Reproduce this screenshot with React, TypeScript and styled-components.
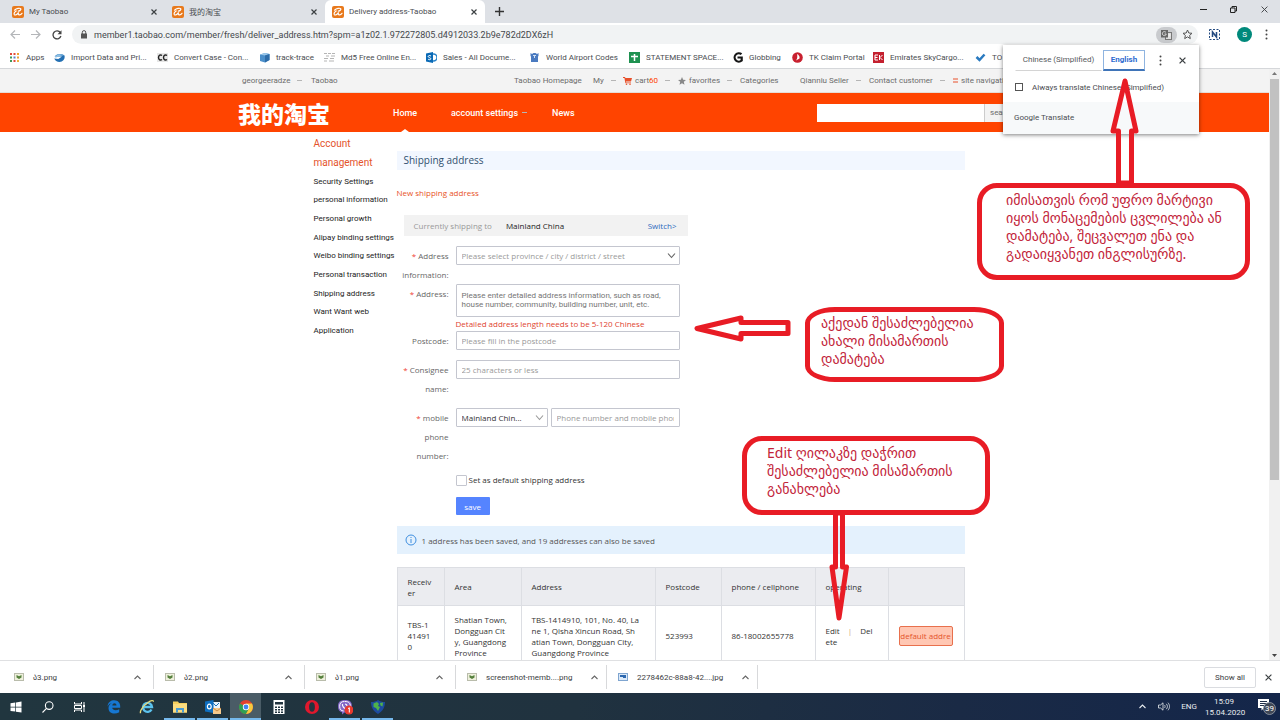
import React from "react";
import styled, { createGlobalStyle } from "styled-components";

const UI = `Roboto, "Noto Sans CJK SC", "DejaVu Sans", sans-serif`;
const CONTENT = `"Open Sans", "Noto Sans", sans-serif`;

const GlobalStyle = createGlobalStyle`
  *, *::before, *::after { box-sizing: border-box; }
  body { margin: 0; background: #fff; font-family: ${UI}; font-size: 8px; color: #3c4043; }
  button, input, select, textarea { font: inherit; color: inherit; margin: 0; }
  button { border: 0; background: none; padding: 0; }
  a { color: inherit; text-decoration: none; }
  svg { display: block; flex: none; }
`;

const Desktop = styled.div`
  position: relative;
  display: flex;
  flex-direction: column;
  height: 100vh;
  overflow: hidden;
`;

/* ---------- browser chrome ---------- */

const TabStrip = styled.div`
  display: flex;
  height: 23px;
  background: #dee1e6;
`;

const Tab = styled.div<{ $active?: boolean }>`
  display: flex;
  align-items: center;
  gap: 5px;
  width: 160px;
  padding: 0 7px 0 7px;
  border-radius: 6px 6px 0 0;
  background: ${(p) => (p.$active ? "#fff" : "transparent")};
  color: #4a4d51;
  white-space: nowrap;
`;

const Tabs = styled.div`
  display: flex;
  padding-left: 5px;
`;

const Grow = styled.span`
  flex: 1;
`;

const IconButton = styled.button<{ $w?: number }>`
  display: flex;
  align-items: center;
  justify-content: center;
  width: ${(p) => p.$w ?? 10}px;
  color: #3c4043;
`;

const WindowButtons = styled.div`
  display: flex;
  margin-left: auto;
  padding-bottom: 4px;
`;

const Toolbar = styled.div`
  display: flex;
  align-items: center;
  height: 23px;
  padding: 0 6px 0 4px;
`;

const AddressBar = styled.div`
  display: flex;
  align-items: center;
  flex: 1;
  height: 19px;
  margin-left: 5px;
  padding: 0 5px 0 8px;
  border-radius: 10px;
  background: #f1f3f4;
`;

const Url = styled.input`
  flex: 1;
  border: 0;
  outline: 0;
  padding: 0 0 0 6px;
  background: none;
  color: #45484c;
  font-size: 9px;
`;

const TranslateBadge = styled.button`
  display: flex;
  align-items: center;
  justify-content: center;
  width: 21px;
  height: 16px;
  margin-right: 5px;
  border-radius: 8px;
  background: #c9cbce;
`;

const Avatar = styled.button`
  width: 15px;
  height: 15px;
  margin: 0 6px 0 7px;
  border-radius: 50%;
  background: #00897b;
  color: #fff;
  line-height: 15px;
`;

const Bookmarks = styled.nav`
  display: flex;
  align-items: center;
  height: 23px;
  padding-left: 9px;
  border-bottom: 1px solid #d5d7da;
  overflow: hidden;
`;

const Bookmark = styled.a<{ $w: number }>`
  display: flex;
  align-items: center;
  gap: 6px;
  flex: none;
  width: ${(p) => p.$w}px;
  height: 20px;
  color: #4a4d51;
  white-space: nowrap;
`;

/* ---------- page ---------- */

const Viewport = styled.div`
  display: flex;
  flex: 1;
  min-height: 0;
`;

const Page = styled.div`
  flex: 1;
  min-width: 0;
  overflow: hidden;
`;

const Scrollbar = styled.div`
  display: flex;
  flex-direction: column;
  align-items: center;
  width: 11px;
  padding: 3px 0;
  background: #f1f1f1;
`;

const Thumb = styled.div`
  width: 9px;
  height: 401px;
  margin-top: 4px;
  margin-bottom: auto;
  background: #c1c1c1;
`;

const SiteBar = styled.div`
  height: 24px;
  background: #f3f3f3;
  border-bottom: 1px solid #e6ddd6;
`;

const Wide = styled.div`
  display: flex;
  align-items: center;
  width: 793px;
  height: 100%;
  margin: 0 auto;
`;

const SiteLinks = styled(Wide)`
  padding-left: 4px;
`;

const SiteLink = styled.a<{ $w: number }>`
  display: flex;
  align-items: center;
  gap: 3px;
  flex: none;
  width: ${(p) => p.$w}px;
  color: #6c6c6c;
  white-space: nowrap;
`;

const Orange = styled.em`
  color: #f40;
  font-style: normal;
`;

const Caret = styled.i`
  width: 5px;
  height: 1px;
  margin-left: 4px;
  background: #b5b5b5;
`;

const Brand = styled.header`
  height: 39px;
  background: #ff4400;
`;

const BrandName = styled.a`
  width: 155px;
  color: #fff;
  font: 900 23px/38px "Noto Sans CJK SC", sans-serif;
`;

const BrandLink = styled.a<{ $w: number; $current?: boolean }>`
  position: relative;
  display: flex;
  align-items: center;
  flex: none;
  width: ${(p) => p.$w}px;
  height: 39px;
  color: #fff;
  font-size: 9px;
  font-weight: 500;
  white-space: nowrap;

  &::after {
    content: "";
    display: ${(p) => (p.$current ? "block" : "none")};
    position: absolute;
    left: 8px;
    bottom: 0;
    border: 4px solid transparent;
    border-top: 0;
    border-bottom: 3px solid #fff;
  }
`;

const SearchInput = styled.input`
  flex: none;
  width: 167px;
  height: 18px;
  border: 0;
  background: #fff;
`;

const SearchButton = styled.button`
  flex: none;
  width: 47px;
  height: 18px;
  padding-left: 5px;
  border-left: 1px solid #ccc;
  background: #f3f3f3;
  color: #6c6c6c;
  text-align: left;
`;

const Columns = styled.div`
  display: flex;
  width: 660px;
  margin: 0 auto;
`;

const SideNav = styled.nav`
  flex: none;
  width: 92px;
  padding: 2px 0 0 9px;
`;

const SideTitle = styled.h2`
  margin: 0;
  color: #e4532b;
  font-size: 10px;
  font-weight: 400;
  line-height: 19px;
`;

const SideList = styled.ul`
  display: grid;
  grid-auto-rows: 1fr;
  align-items: center;
  height: 168px;
  margin: 0;
  padding: 0;
  list-style: none;
  color: #1c1c1c;
  white-space: nowrap;
`;

const Main = styled.main`
  flex: 1;
  padding-top: 19px;
  font-family: ${CONTENT};
`;

const PageTitle = styled.h1`
  margin: 0;
  padding-left: 7px;
  background: #f2f7ff;
  color: #31506e;
  font-size: 10px;
  font-weight: 400;
  line-height: 19px;
`;

const NewAddress = styled.p`
  margin: 13px 0;
  color: #e8531f;
  line-height: 19px;
`;

const Destination = styled.div`
  display: flex;
  align-items: center;
  gap: 14px;
  width: 284px;
  height: 21px;
  margin-left: 7px;
  padding: 0 11px 0 10px;
  background: #f2f2f2;
  color: #999;
`;

const Country = styled.span`
  flex: 1;
  color: #222;
`;

const BlueLink = styled.a`
  color: #2e6bc0;
`;

const Form = styled.form`
  display: flex;
  flex-direction: column;
  padding-top: 10px;
  color: #666;
`;

const Field = styled.div<{ $gap?: number }>`
  display: grid;
  grid-template-columns: 52px 224px;
  column-gap: 7px;
  align-items: start;
  margin-bottom: ${(p) => p.$gap ?? 0}px;
`;

const Label = styled.label`
  line-height: 19px;
  text-align: right;
`;

const Star = styled.span`
  color: #f04134;
`;

const Split = styled.div`
  display: grid;
  grid-template-columns: 92px 129px;
  gap: 3px;
`;

const TextInput = styled.input`
  width: 100%;
  height: 19px;
  padding: 0 5px;
  border: 1px solid #c4c6cf;
  border-radius: 1px;
  background: #fff;
  outline: 0;
  &::placeholder { color: #999; opacity: 1; }
`;

const SelectBox = styled.div`
  position: relative;
  svg { position: absolute; right: 4px; top: 5px; pointer-events: none; }
`;

const Select = styled.select<{ $dark?: boolean }>`
  display: block;
  width: 100%;
  height: 19px;
  padding: 0 5px;
  appearance: none;
  border: 1px solid #c4c6cf;
  border-radius: 1px;
  background: #fff;
  color: ${(p) => (p.$dark ? "#333" : "#999")};
`;

const TextArea = styled.textarea`
  display: block;
  width: 100%;
  height: 33px;
  padding: 6px 5px;
  border: 1px solid #c4c6cf;
  border-radius: 1px;
  resize: none;
  overflow: hidden;
  font-family: ${UI};
  line-height: 9px;
  outline: 0;
  &::placeholder { color: #757575; opacity: 1; }
`;

const ErrorText = styled.div`
  color: #e0432f;
  line-height: 14px;
`;

const CheckLabel = styled.label`
  display: flex;
  align-items: center;
  gap: 2px;
  margin: 9px 0 11px 59px;
  color: #333;
  line-height: 12px;
`;

const Checkbox = styled.input`
  appearance: none;
  width: 11px;
  height: 11px;
  border: 1px solid #c4c6cf;
  border-radius: 1px;
  background: #fff;
`;

const Save = styled.button`
  width: 34px;
  height: 18px;
  margin-left: 59px;
  border-radius: 1px;
  background: #5584ff;
  color: #fff;
`;

const Notice = styled.div`
  display: flex;
  align-items: center;
  gap: 5px;
  height: 28px;
  margin: 11px 0 13px;
  padding-left: 8px;
  background: #e4f1fd;
  color: #555;
`;

const Table = styled.table`
  width: 567px;
  table-layout: fixed;
  border-collapse: collapse;
  color: #333;
  line-height: 11px;
`;

const Cell = styled.td`
  height: 60px;
  padding: 0 0 0 10px;
  border: 1px solid #dcdee3;
  white-space: pre;
  text-align: left;
`;

const HeadCell = styled.th`
  height: 38px;
  padding: 0 0 0 10px;
  border: 1px solid #dcdee3;
  background: #ebecf0;
  font-weight: 400;
  text-align: left;
  white-space: pre;
`;

const Bar = styled.span`
  margin: 0 8px;
  color: #c9a27c;
`;

const DefaultButton = styled.button`
  display: block;
  width: 54px;
  height: 20px;
  border: 1px solid #e8704d;
  border-radius: 2px;
  background: #ffc7b3;
  color: #e4532b;
  overflow: hidden;
`;

/* ---------- translate bubble ---------- */

const Bubble = styled.section`
  position: absolute;
  top: 45px;
  right: 81px;
  width: 196px;
  background: #fff;
  box-shadow: 0 1px 4px rgba(0, 0, 0, 0.5);
  color: #4a4d51;
`;

const BubbleTop = styled.div`
  display: flex;
  align-items: center;
  height: 30px;
  padding: 0 7px 0 12px;
`;

const LangTab = styled.button<{ $active?: boolean; $w: number }>`
  width: ${(p) => p.$w}px;
  height: 21px;
  margin-right: 1px;
  border: 1px solid ${(p) => (p.$active ? "#8fb4e0" : "transparent")};
  border-bottom: ${(p) => (p.$active ? "2px solid #3f74b8" : "1px solid #d4d4d4")};
  color: ${(p) => (p.$active ? "#2f6bd0" : "#55585c")};
  font-weight: ${(p) => (p.$active ? 700 : 400)};
  line-height: 18px;
  white-space: nowrap;
`;

const Always = styled.label`
  display: flex;
  align-items: center;
  gap: 9px;
  height: 27px;
  padding: 0 0 3px 12px;
`;

const AlwaysBox = styled.input`
  appearance: none;
  width: 8px;
  height: 8px;
  margin: 0;
  border: 1px solid #555;
`;

const BubbleFoot = styled.div`
  height: 32px;
  padding-left: 11px;
  background: #f7f9fa;
  line-height: 32px;
`;

/* ---------- downloads and taskbar ---------- */

const Downloads = styled.div`
  display: flex;
  align-items: center;
  height: 33px;
  padding-left: 3px;
  border-top: 1px solid #dfe0e2;
  background: #fff;
`;

const Download = styled.div`
  display: flex;
  align-items: center;
  gap: 9px;
  width: 151px;
  height: 24px;
  padding: 0 11px;
  border-right: 1px solid #d8d9db;
  white-space: nowrap;
`;

const ShowAll = styled.button`
  width: 52px;
  height: 21px;
  margin: 0 0 0 auto;
  border: 1px solid #dadce0;
  border-radius: 2px;
`;

const Taskbar = styled.footer`
  display: flex;
  align-items: stretch;
  height: 27px;
  background: linear-gradient(90deg, #21363f, #20323f 45%, #1a2a45 75%, #14264a);
  color: #e8ecef;
`;

const TaskButton = styled.button<{ $w: number; $open?: boolean; $active?: boolean }>`
  display: flex;
  align-items: center;
  justify-content: center;
  width: ${(p) => p.$w}px;
  border: solid ${(p) => (p.$active ? "#4a5c66" : "transparent")};
  border-width: 2px 0;
  border-bottom-color: ${(p) => (p.$open || p.$active ? "#76b9ed" : "transparent")};
  background: ${(p) => (p.$active ? "#4a5c66" : "transparent")};
`;

const TaskGroup = styled.div<{ $gap: number }>`
  display: flex;
  gap: ${(p) => p.$gap}px;
  margin-right: 2px;
`;

const Tray = styled.div`
  display: flex;
  align-items: center;
  margin-left: auto;
`;

const Clock = styled.time`
  width: 38px;
  margin: 0 11px 0 8px;
  line-height: 11px;
  text-align: center;
  white-space: nowrap;
`;

/* ---------- instruction notes laid over the screen ---------- */

const Callout = styled.aside<{ $x: number; $y: number; $w: number; $h: number; $r: string; $pad: string }>`
  position: absolute;
  left: ${(p) => p.$x}px;
  top: ${(p) => p.$y}px;
  width: ${(p) => p.$w}px;
  height: ${(p) => p.$h}px;
  padding: ${(p) => p.$pad};
  border: 5px solid #e81c25;
  border-radius: ${(p) => p.$r};
  color: #c2243a;
  font-family: "Noto Sans", "DejaVu Sans", sans-serif;
  font-size: 14px;
  line-height: 18px;
  white-space: pre;
`;

const Arrow = styled.svg<{ $x: number; $y: number }>`
  position: absolute;
  left: ${(p) => p.$x}px;
  top: ${(p) => p.$y}px;
  fill: none;
  stroke: #e81c25;
  stroke-width: 5;
  stroke-linejoin: round;
`;

/* ---------- icons ---------- */

const Favicon = () => (
  <svg width="12" height="12" viewBox="0 0 12 12">
    <rect width="12" height="12" rx="2" fill="#e8791c" />
    <path d="M2.500 4.200C4.500 2.300 8 1.800 8.800 2.800c.5.900-1 2-2.500 2.400M4.200 5C2.500 6 1.500 7.800 2.400 8.700c1.100.9 3.200-.5 4.100-2.300-.5 1.700-.2 2.700 1 2.500 1-.1 1.900-.8 2.500-1.600" fill="none" stroke="#fff" strokeWidth="1.200" strokeLinecap="round" />
  </svg>
);

const Close = ({ s = 6, w = 1.2 }: { s?: number; w?: number }) => (
  <svg width={s} height={s} viewBox="0 0 6 6" stroke="currentColor" strokeWidth={w}>
    <path d="M.5.5l5 5M5.500.5l-5 5" />
  </svg>
);

const Chevron = ({ up, c = "#666", s = 9 }: { up?: boolean; c?: string; s?: number }) => (
  <svg width={s} height={s} viewBox="0 0 9 9" fill="none" stroke={c} strokeWidth="1.100">
    <path d={up ? "M1.500 6l3-3 3 3" : "M1 2.500L4.500 6.500 8 2.500"} />
  </svg>
);

const Dots = () => (
  <svg width="3" height="11" viewBox="0 0 3 11" fill="#444">
    <circle cx="1.500" cy="1.500" r="1" />
    <circle cx="1.500" cy="5.500" r="1" />
    <circle cx="1.500" cy="9.500" r="1" />
  </svg>
);

const Picture = ({ blue }: { blue?: boolean }) => (
  <svg width="10" height="8" viewBox="0 0 10 8">
    <rect x=".5" y=".5" width="9" height="7" fill={blue ? "#dbe9f8" : "#eef0dc"} stroke={blue ? "#7fa5d0" : "#b9bcab"} />
    <path d={blue ? "M2 2h6v3H5V4H2z" : "M2.500 2l2.500 1.200L7.500 2v2.500L5 6 2.500 4.500z"} fill={blue ? "#2c68b0" : "#55803c"} />
  </svg>
);

const bookmarkIcons: Record<string, React.ReactNode> = {
  apps: (
    <>
      {["#e24a3b", "#e24a3b", "#f0a22c", "#3f9a58", "#5a7dc8", "#e8a33a", "#3f9a58", "#e24a3b", "#f0b13c"].map((c, i) => (
        <rect key={i} x={1 + (i % 3) * 3.5} y={1 + Math.floor(i / 3) * 3.5} width="2" height="2" fill={c} />
      ))}
    </>
  ),
  ie: (
    <>
      <path d="M.5 4.500C3 1 9 1.500 10.500 3.500c.8 3-1 6-5 6.500C3 10 1 8.500.3 6.500l4 .5L8 4.500z" fill="#2470b3" />
      <path d="M1 4.500c3-3 7-2.500 9-.8-3-.7-5 .8-8.500 2z" fill="#8cc0e6" />
    </>
  ),
  cc: (
    <>
      <rect y="1" width="11" height="9" fill="#e6e6e6" />
      <path d="M5 3.500C3.500 2.300 1.500 3.200 1.500 5.500S3.500 8.700 5 7.500M10 3.500C8.500 2.300 6.500 3.200 6.500 5.500S8.500 8.700 10 7.500" fill="none" stroke="#222" strokeWidth="1.400" />
    </>
  ),
  cube: (
    <>
      <path d="M1 2.500L6 1l4.500 1v6L6 10.500 1 9z" fill="#4b8fca" />
      <path d="M1 2.500L6 1l4.500 1L6 3.500z" fill="#9cc8ea" />
      <path d="M6 3.500l4.500-1.500v6L6 10.500z" fill="#2d6ca8" />
    </>
  ),
  md: <path d="M0 1.500h3M4 1.500h3M8 1.500h3M2 4h3M7 4h4M0 6.500h4M6 6.500h4M0 9h3M5 9h5" stroke="#b5b5b5" />,
  sales: (
    <>
      <circle cx="7.500" cy="5.500" r="3.500" fill="none" stroke="#2a84c9" strokeWidth="1.500" />
      <path d="M0 1.500L7 0v11L0 9.500z" fill="#0a6ab6" />
      <path d="M5 4C3.500 3 2 3.600 2.200 4.700S5 5.600 4.800 6.800 3 8 2 7" fill="none" stroke="#fff" />
    </>
  ),
  shirt: (
    <>
      <path d="M1.500 1l1.500 1 1.500-1h2L8 2l1.500-1v3L9 4.500V10H2V4.500L1.500 4z" fill="#4a7ac0" />
      <path d="M4 3.500h3M5.500 3.500V6" stroke="#cfe0f5" fill="none" />
    </>
  ),
  sheet: (
    <>
      <rect width="11" height="11" fill="#1e9150" />
      <path d="M2 4.500h7M5.500 2v7" stroke="#fff" strokeWidth="1.500" />
    </>
  ),
  glob: <path d="M9.500 2.200A4.200 4.200 0 1 0 9.700 8.500V5.500H5.500" fill="none" stroke="#161616" strokeWidth="2.200" />,
  tk: (
    <>
      <circle cx="5.500" cy="5.500" r="5.300" fill="#c8202f" />
      <path d="M5 2c2 1 3 2.500 2.500 4.500L4 8.500C5.500 6.500 5.500 4.500 5 2z" fill="#fff" />
    </>
  ),
  ek: (
    <>
      <rect width="11" height="11" fill="#c4202f" />
      <path d="M5 3H2v5h3M2 5.500h2.500M6.500 3v5M9.500 3L7 5.500 9.500 8" stroke="#fff" fill="none" />
    </>
  ),
  check: <path d="M1.500 5l3 3L9.500 2.500" fill="none" stroke="#2a7ac0" strokeWidth="2.500" />,
};

const bookmarks: [string, string, number][] = [
  ["apps", "Apps", 45],
  ["ie", "Import Data and Pri...", 103],
  ["cc", "Convert Case - Con...", 102],
  ["cube", "track-trace", 65],
  ["md", "Md5 Free Online En...", 102],
  ["sales", "Sales - All Docume...", 103],
  ["shirt", "World Airport Codes", 100],
  ["sheet", "STATEMENT SPACE...", 103],
  ["glob", "Globbing", 60],
  ["tk", "TK Claim Portal", 81],
  ["ek", "Emirates SkyCargo...", 102],
  ["check", "TO", 50],
];

const sideItems = [
  "Security Settings",
  "personal information",
  "Personal growth",
  "Alipay binding settings",
  "Weibo binding settings",
  "Personal transaction",
  "Shipping address",
  "Want Want web",
  "Application",
];

const columns: [string, number][] = [
  ["Receiv\ner", 47],
  ["Area", 77],
  ["Address", 134],
  ["Postcode", 66],
  ["phone / cellphone", 94],
  ["operating", 73],
  ["", 76],
];

type Task = { name: string; open?: boolean; active?: boolean; art: React.ReactNode };

const systemTasks: Task[] = [
  { name: "Start", art: <path d="M2.500 4.200L7.300 3.500v4.200H2.500zM8 3.400l5.500-.8v5.100H8zM2.500 8.400h4.800v4.200l-4.800-.7zM8 8.400h5.500v5L8 12.700z" fill="#fff" /> },
  { name: "Search", art: <g fill="none" stroke="#fff" strokeWidth="1.100"><circle cx="9.200" cy="6.600" r="3.800" /><path d="M6.500 9.300L2.500 13.500" /></g> },
  { name: "Task view", art: <g fill="none" stroke="#fff"><path d="M2.500 3v2h7V3M2.500 13v-2h7v2M2.500 6.500h7v3h-7zM12 3v10" /><path d="M11 7h2" strokeWidth="2" /></g> },
];

const appTasks: Task[] = [
  { name: "Edge", art: <path d="M1.500 7.500C2 3 5 1.300 8.200 1.300c4 0 6 3 6 6.200v1.300H6.200c.2 2.500 4 3.200 7 1.500v3C8.500 15.900 2.500 14.500 2.500 9c0-2.500 1.500-4 3.500-5C4 4.300 2.500 5.500 1.500 7.500zM6.300 6.500h4.200C10.400 3.600 6.600 3.700 6.300 6.500z" fill="#1677d2" /> },
  { name: "Internet Explorer", art: <g fill="none"><path d="M12.500 10.500A4.500 4.500 0 1 1 13 8H4.500" stroke="#5cc3ee" strokeWidth="2.400" /><path d="M1.500 14.200C.5 12 4 7 9 3.500c3-2 5.500-2.500 5.500-.8" stroke="#e9dc7a" strokeWidth="1.200" /></g> },
  { name: "File Explorer", open: true, art: <g><path d="M1 2.500h5l1 1.500h8v9.500H1z" fill="#f5cf5e" /><path d="M1 5h14v8.500H1z" fill="#fbdc80" /><path d="M4 13.500V9h8v4.500h-2V11H6v2.500z" fill="#4b9cd3" /></g> },
  { name: "Outlook", open: true, art: <g><path d="M7 3h8v8H7z" fill="#e9f3fb" /><path d="M8 4l3 3 3-3" stroke="#1870b8" fill="none" /><path d="M0 2.500L8.500 1v13L0 12.500z" fill="#0f6fc0" /><ellipse cx="4.300" cy="7.500" rx="1.900" ry="2.300" fill="none" stroke="#fff" strokeWidth="1.200" /><path d="M8 9h8v6H8z" fill="#f6c98c" /><path d="M8 9l4 3 4-3" stroke="#c98c45" fill="none" /></g> },
  { name: "Chrome", active: true, art: <g><circle cx="8" cy="8" r="7" fill="#e2412f" /><path d="M8 8L2 4.400A7 7 0 0 0 8 15l3-5.500z" fill="#2fa052" /><path d="M8 15A7 7 0 0 0 14 4.500H8l3 5z" fill="#f7ca3e" /><circle cx="8" cy="8" r="3.200" fill="#fff" /><circle cx="8" cy="8" r="2.400" fill="#4284ee" /></g> },
  { name: "Calculator", art: <g><rect x="2.500" y="1" width="11" height="14" fill="#fff" /><path d="M4 3h8v2.500H4zM4 7.500h2v1.500H4zM7 7.500h2v1.500H7zM10 7.500h2v1.500h-2zM4 10h2v1.500H4zM7 10h2v1.500H7zM10 10h2v1.500h-2zM4 12.500h2V14H4zM7 12.500h2V14H7zM10 12.500h2V14h-2z" fill="#22343f" /></g> },
  { name: "Opera", art: <g><circle cx="8" cy="8" r="7" fill="#e0182d" /><ellipse cx="8" cy="8" rx="2.900" ry="4.800" fill="#22343f" /></g> },
  { name: "Viber", open: true, art: <g><path d="M8 1c5 0 7 2 7 6.500S12 13.500 7.500 13.500L5 15.500v-2.300C2 12.500 1 10.500 1 7.500 1 3 3 1 8 1z" fill="#8368c8" /><path d="M7.500 2.500C4 2.500 2.700 4 2.700 7.300s1.300 4.500 4 4.700M8 2.500c3.800 0 5.300 1.300 5.300 4.800" fill="none" stroke="#fff" /><path d="M5.500 5c-.5 2 1.500 4.500 4 5M8 5c1.500.2 2 .8 2.100 2" fill="none" stroke="#fff" strokeWidth="1.200" /><circle cx="12" cy="11" r="4.500" fill="#e83a2e" /><path d="M11 9.700l1.300-1v4.800" stroke="#fff" fill="none" /></g> },
  { name: "Security", open: true, art: <g><path d="M8 1c2 1.500 4 2 7 2 0 5-2 9-7 12C3 12 1 8 1 3 4 3 6 2.500 8 1z" fill="#1d4ba0" /><path d="M3.500 4.500L7 3l2 2-1 2 2 1-2 4-2-3-2.500-1zM10 4l3-.5-.5 4-2-1z" fill="#4fb24a" /></g> },
];

const TaskItem = ({ t, w }: { t: Task; w: number }) => (
  <TaskButton aria-label={t.name} $w={w} $open={t.open} $active={t.active}>
    <svg width="16" height="16" viewBox="0 0 16 16">{t.art}</svg>
  </TaskButton>
);

export default function App() {
  return (
    <Desktop>
      <GlobalStyle />

      <TabStrip>
        <Tabs>
          {["My Taobao", "我的淘宝", "Delivery address-Taobao"].map((t, i) => (
            <Tab key={t} $active={i === 2}>
              <Favicon />
              {t}
              <Grow />
              <IconButton aria-label="Close tab" $w={8}><Close /></IconButton>
            </Tab>
          ))}
        </Tabs>
        <IconButton aria-label="New tab" $w={28}>
          <svg width="9" height="9" viewBox="0 0 9 9" stroke="#333" strokeWidth="1.400"><path d="M4.500 0v9M0 4.500h9" /></svg>
        </IconButton>
        <WindowButtons>
          <IconButton aria-label="Minimize" $w={30}>
            <svg width="7" height="7" viewBox="0 0 7 7" stroke="#222"><path d="M0 3.500h7" /></svg>
          </IconButton>
          <IconButton aria-label="Restore" $w={31}>
            <svg width="7" height="7" viewBox="0 0 7 7" stroke="#222" fill="none"><path d="M.5 2h4.500v4.500H.5zM2 2V.5h4.500V5H5" /></svg>
          </IconButton>
          <IconButton aria-label="Close window" $w={31}><Close s={7} w={0.8} /></IconButton>
        </WindowButtons>
      </TabStrip>

      <Toolbar>
        <IconButton aria-label="Back" $w={21}>
          <svg width="10" height="9" viewBox="0 0 10 9" fill="none" stroke="#b4b6b9" strokeWidth="1.200"><path d="M10 4.500H1M5 .5l-4 4 4 4" /></svg>
        </IconButton>
        <IconButton aria-label="Forward" $w={21}>
          <svg width="10" height="9" viewBox="0 0 10 9" fill="none" stroke="#b4b6b9" strokeWidth="1.200"><path d="M0 4.500h9M5 .5l4 4-4 4" /></svg>
        </IconButton>
        <IconButton aria-label="Reload" $w={21}>
          <svg width="10" height="10" viewBox="0 0 10 10"><path d="M8.300 2.500A4 4 0 1 0 8.900 6" fill="none" stroke="#444" strokeWidth="1.300" /><path d="M9.500.3v4h-4z" fill="#444" /></svg>
        </IconButton>
        <AddressBar>
          <svg width="8" height="9" viewBox="0 0 8 9"><rect x="1" y="3.500" width="6" height="5" fill="#555" /><path d="M2.300 4V2.300a1.700 1.700 0 0 1 3.400 0V4" fill="none" stroke="#555" /></svg>
          <Url aria-label="Address" defaultValue="member1.taobao.com/member/fresh/deliver_address.htm?spm=a1z02.1.972272805.d4912033.2b9e782d2DX6zH" />
          <TranslateBadge aria-label="Translate this page">
            <svg width="11" height="10" viewBox="0 0 11 10"><rect x="4.500" y="2.500" width="6" height="7" fill="#ddd" stroke="#777" /><rect width="7" height="7.500" fill="#666" /><path d="M5 2.500A2 2 0 1 0 5.300 4H3.500M7 5h3M8.500 4v1c0 1.500-.5 2-1.500 2.500" fill="none" stroke="#eee" strokeWidth=".8" /></svg>
          </TranslateBadge>
          <svg width="11" height="11" viewBox="0 0 11 11" fill="none" stroke="#555"><path d="M5.500 1l1.300 3 3.200.3-2.400 2.100.7 3.200-2.800-1.700-2.800 1.700.7-3.200L1 4.300 4.200 4z" /></svg>
        </AddressBar>
        <IconButton aria-label="Extension" $w={32}>
          <svg width="11" height="11" viewBox="0 0 11 11" fill="none" stroke="#234a80"><rect x=".5" y=".5" width="10" height="10" strokeDasharray="2 1.500" /><path d="M3.500 8V3l4 5V3" strokeWidth="1.500" /></svg>
        </IconButton>
        <Avatar>S</Avatar>
        <IconButton aria-label="Menu" $w={16}><Dots /></IconButton>
      </Toolbar>

      <Bookmarks>
        {bookmarks.map(([icon, text, w]) => (
          <Bookmark key={text} href="#" $w={w}>
            <svg width="11" height="11" viewBox="0 0 11 11">{bookmarkIcons[icon]}</svg>
            {text}
          </Bookmark>
        ))}
      </Bookmarks>

      <Viewport>
        <Page>
          <SiteBar>
            <SiteLinks>
              <SiteLink href="#" $w={69}>georgeeradze<Caret /></SiteLink>
              <SiteLink href="#" $w={203}>Taobao</SiteLink>
              <SiteLink href="#" $w={79}>Taobao Homepage</SiteLink>
              <SiteLink href="#" $w={30}>My<Caret /></SiteLink>
              <SiteLink href="#" $w={55}>
                <svg width="9" height="8" viewBox="0 0 9 8" fill="#e8502a"><path d="M0 0h2l.4 1H9L8 4.500H3L3.200 5.500H8v.8H2.400L1.400 1H0z" /><circle cx="3.500" cy="7.200" r=".8" /><circle cx="7" cy="7.200" r=".8" /></svg>
                <span>cart<Orange>60</Orange></span><Caret />
              </SiteLink>
              <SiteLink href="#" $w={62}>
                <svg width="8" height="8" viewBox="0 0 11 11" fill="#888"><path d="M5.500 0l1.600 3.700 3.900.4-3 2.600.9 4-3.400-2.100-3.400 2.100.9-4-3-2.600 3.900-.4z" /></svg>
                favorites<Caret />
              </SiteLink>
              <SiteLink href="#" $w={60}>Categories</SiteLink>
              <SiteLink href="#" $w={69}>Qianniu Seller<Caret /></SiteLink>
              <SiteLink href="#" $w={84}>Contact customer<Caret /></SiteLink>
              <SiteLink href="#" $w={70}>
                <svg width="5" height="5" viewBox="0 0 5 5" stroke="#e8502a"><path d="M0 1h5M0 4h5" /></svg>
                site navigation
              </SiteLink>
            </SiteLinks>
          </SiteBar>

          <Brand>
            <Wide>
              <BrandName href="#">我的淘宝</BrandName>
              <BrandLink href="#" $w={58} $current>Home</BrandLink>
              <BrandLink href="#" $w={101}>account settings<Caret /></BrandLink>
              <BrandLink href="#" $w={265}>News</BrandLink>
              <SearchInput aria-label="Search Taobao" />
              <SearchButton>search</SearchButton>
            </Wide>
          </Brand>

          <Columns>
            <SideNav>
              <SideTitle>Account<br />management</SideTitle>
              <SideList>
                {sideItems.map((s) => <li key={s}><a href="#">{s}</a></li>)}
              </SideList>
            </SideNav>
            <Main>
              <PageTitle>Shipping address</PageTitle>
              <NewAddress>New shipping address</NewAddress>
              <Destination>
                <span>Currently shipping to</span>
                <Country>Mainland China</Country>
                <BlueLink href="#">Switch&gt;</BlueLink>
              </Destination>
              <Form>
                <Field>
                  <Label htmlFor="region"><Star>*</Star> Address<br />information:</Label>
                  <SelectBox>
                    <Select id="region"><option>Please select province / city / district / street</option></Select>
                    <Chevron />
                  </SelectBox>
                </Field>
                <Field>
                  <Label htmlFor="street"><Star>*</Star> Address:</Label>
                  <div>
                    <TextArea id="street" placeholder="Please enter detailed address information, such as road, house number, community, building number, unit, etc." />
                    <ErrorText>Detailed address length needs to be 5-120 Chinese</ErrorText>
                  </div>
                </Field>
                <Field $gap={10}>
                  <Label htmlFor="postcode">Postcode:</Label>
                  <TextInput id="postcode" placeholder="Please fill in the postcode" />
                </Field>
                <Field $gap={10}>
                  <Label htmlFor="consignee"><Star>*</Star> Consignee<br />name:</Label>
                  <TextInput id="consignee" placeholder="25 characters or less" />
                </Field>
                <Field>
                  <Label htmlFor="phone"><Star>*</Star> mobile<br />phone<br />number:</Label>
                  <Split>
                    <SelectBox>
                      <Select $dark aria-label="Phone region"><option>Mainland Chin...</option></Select>
                      <Chevron c="#999" />
                    </SelectBox>
                    <TextInput id="phone" placeholder="Phone number and mobile phone number" />
                  </Split>
                </Field>
                <CheckLabel><Checkbox type="checkbox" />Set as default shipping address</CheckLabel>
                <Save type="button">save</Save>
              </Form>
              <Notice>
                <svg width="12" height="12" viewBox="0 0 12 12" fill="none" stroke="#3f8fe0"><circle cx="6" cy="6" r="5" /><path d="M6 3v1M6 5v4" /></svg>
                1 address has been saved, and 19 addresses can also be saved
              </Notice>
              <Table>
                <colgroup>{columns.map(([c, w]) => <col key={c} width={w} />)}</colgroup>
                <thead>
                  <tr>{columns.map(([c]) => <HeadCell key={c}>{c}</HeadCell>)}</tr>
                </thead>
                <tbody>
                  <tr>
                    <Cell>{"TBS-1\n41491\n0"}</Cell>
                    <Cell>{"Shatian Town,\nDongguan Cit\ny, Guangdong\nProvince"}</Cell>
                    <Cell>{"TBS-1414910, 101, No. 40, La\nne 1, Qisha Xincun Road, Sh\natian Town, Dongguan City,\nGuangdong Province"}</Cell>
                    <Cell>523993</Cell>
                    <Cell>86-18002655778</Cell>
                    <Cell><a href="#">Edit</a><Bar>|</Bar><a href="#">Del<br />ete</a></Cell>
                    <Cell><DefaultButton>default addre</DefaultButton></Cell>
                  </tr>
                </tbody>
              </Table>
            </Main>
          </Columns>
        </Page>
        <Scrollbar>
          <svg width="5" height="3" viewBox="0 0 5 3"><path d="M0 3L2.500 0 5 3z" fill="#777" /></svg>
          <Thumb />
          <svg width="5" height="3" viewBox="0 0 5 3"><path d="M0 0l2.500 3L5 0z" fill="#444" /></svg>
        </Scrollbar>
      </Viewport>

      <Downloads>
        {["ა3.png", "ა2.png", "ა1.png", "screenshot-memb....png", "2278462c-88a8-42....jpg"].map((f, i) => (
          <Download key={f}>
            <Picture blue={i === 4} />
            {f}
            <Grow />
            <Chevron up />
          </Download>
        ))}
        <ShowAll>Show all</ShowAll>
        <IconButton aria-label="Close downloads" $w={24}><Close s={7} w={1} /></IconButton>
      </Downloads>

      <Taskbar>
        <TaskGroup $gap={0}>{systemTasks.map((t) => <TaskItem key={t.name} t={t} w={32} />)}</TaskGroup>
        <TaskGroup $gap={2}>{appTasks.map((t) => <TaskItem key={t.name} t={t} w={31} />)}</TaskGroup>
        <Tray>
          <Chevron up c="#e8ecef" />
          <IconButton aria-label="Volume" $w={34}>
            <svg width="12" height="9" viewBox="0 0 12 9" fill="none" stroke="#e8ecef"><path d="M.5 3h2L5 .8v7.400L2.500 6h-2zM6.500 3c.8 1 .8 2 0 3M8.300 1.800c1.500 1.700 1.500 3.700 0 5.400M10 .7c2 2.500 2 5 0 7.600" strokeWidth=".8" /></svg>
          </IconButton>
          ENG
          <Clock>15:09<br />15.04.2020</Clock>
          <IconButton aria-label="39 notifications" $w={26}>
            <svg width="19" height="17" viewBox="0 0 19 17"><path d="M0 1h11v9H6l-2.500 2.500V10H0z" fill="#fff" /><path d="M2 3.500h7M2 5.500h7M2 7.500h4" stroke="#22304a" /><circle cx="11.500" cy="10.500" r="6" fill="#3f4756" stroke="#9aa2ad" strokeWidth=".8" /><text x="11.500" y="13.300" textAnchor="middle" fill="#fff" fontSize="8">39</text></svg>
          </IconButton>
        </Tray>
      </Taskbar>

      <Bubble>
        <BubbleTop>
          <LangTab $w={87}>Chinese (Simplified)</LangTab>
          <LangTab $w={42} $active>English</LangTab>
          <IconButton aria-label="Options" $w={28}><Dots /></IconButton>
          <IconButton aria-label="Close" $w={16}><Close s={7} w={1.1} /></IconButton>
        </BubbleTop>
        <Always><AlwaysBox type="checkbox" />Always translate Chinese (Simplified)</Always>
        <BubbleFoot>Google Translate</BubbleFoot>
      </Bubble>

      <Arrow $x={1105} $y={74} width="40" height="112"><path d="M13.500 109V57H8L20 7l11 50h-4.500v52z" /></Arrow>
      <Callout $x={977} $y={183} $w={273} $h={97} $r="20px" $pad="3px 0 0 24px">
        {"იმისათვის რომ უფრო მარტივი\nიყოს მონაცემების ცვლილება ან\nდამატება, შეცვალეთ ენა და\nგადაიყვანეთ ინგლისურზე."}
      </Callout>

      <Arrow $x={690} $y={310} width="104" height="38"><path d="M98 12.500H51V8L7 18.500 51 29v-5.500h47z" /></Arrow>
      <Callout $x={805} $y={307} $w={199} $h={75} $r="30px / 16px" $pad="2px 0 0 11px">
        {"აქედან შესაძლებელია\nახალი მისამართის\nდამატება"}
      </Callout>

      <Arrow $x={825} $y={510} width="30" height="115"><path d="M10.500 3v54H7l7 51 7.500-51h-4V3z" /></Arrow>
      <Callout $x={742} $y={436} $w={248} $h={79} $r="20px" $pad="3px 0 0 20px">
        {"Edit ღილაკზე დაჭრით\nშესაძლებელია მისამართის\nგანახლება"}
      </Callout>
    </Desktop>
  );
}
